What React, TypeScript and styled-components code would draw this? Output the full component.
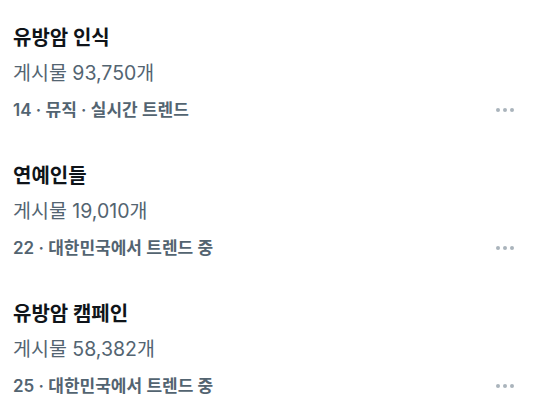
import styled, { createGlobalStyle } from 'styled-components';

const GlobalStyle = createGlobalStyle`
body {
  margin: 0;
  background: #ffffff;
  font-family: Inter, "Noto Sans CJK KR", "Noto Sans", sans-serif;
}
`;

const TrendList = styled.div`
display: flex;
flex-direction: column;
padding-top: 20px;
`;

const TrendItem = styled.div`
display: flex;
flex-direction: column;
height: 138px;
padding: 0 13px;
`;

const Title = styled.div`
font-size: 20px;
font-weight: 700;
color: #0f1419;
line-height: 36px;
`;

const PostCount = styled.div`
font-size: 19.5px;
font-weight: 400;
color: #536471;
line-height: 34px;
`;

const Meta = styled.div`
display: flex;
align-items: center;
justify-content: space-between;
font-size: 17px;
font-weight: 600;
color: #536471;
line-height: 40px;
`;

const MoreButton = styled.span`
display: flex;
gap: 3px;
margin-right: 13px;
`;

const Dot = styled.span`
width: 4px;
height: 4px;
border-radius: 50%;
background: #aab4bc;
`;

const TRENDS = [
    {title: "유방암 인식", count: "게시물 93,750개", meta: "14 · 뮤직 · 실시간 트렌드"},
    {title: "연예인들", count: "게시물 19,010개", meta: "22 · 대한민국에서 트렌드 중"},
    {title: "유방암 캠페인", count: "게시물 58,382개", meta: "25 · 대한민국에서 트렌드 중"},
];

function App() {
    return (
        <>
        <GlobalStyle />
        <TrendList>
            {TRENDS.map((t) => (
                <TrendItem key={t.title}>
                    <Title>{t.title}</Title>
                    <PostCount>{t.count}</PostCount>
                    <Meta>
                        <span>{t.meta}</span>
                        <MoreButton><Dot /><Dot /><Dot /></MoreButton>
                    </Meta>
                </TrendItem>
            ))}
        </TrendList>
        </>
    );
}

export default App;
